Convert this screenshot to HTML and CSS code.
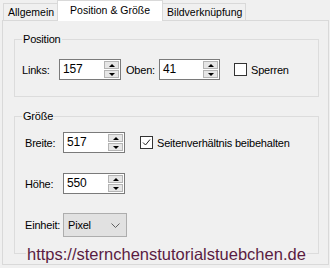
FILE: index.html
```html
<!DOCTYPE html>
<html lang="de">

<head>
    <meta charset="UTF-8">
    <title>Position &amp; Größe</title>
    <link rel="stylesheet" href="styles.css">
</head>

<body>
    <div class="dialog">
        <div class="tabs">
            <div class="tab">Allgemein</div>
            <div class="tab active">Position &amp; Größe</div>
            <div class="tab">Bildverknüpfung</div>
        </div>

        <div class="page">
            <!-- Position -->
            <fieldset class="group group-pos">
                <legend>Position</legend>
                <div class="row">
                    <span class="lbl lbl-links">Links:</span>
                    <div class="spin"><span class="val">157</span><span class="spin-btns"><span class="up"></span><span class="down"></span></span></div>
                    <span class="lbl lbl-oben">Oben:</span>
                    <div class="spin spin-narrow"><span class="val">41</span><span class="spin-btns"><span class="up"></span><span class="down"></span></span></div>
                    <span class="check check-lock"></span>
                    <span class="check-text">Sperren</span>
                </div>
            </fieldset>

            <!-- Größe -->
            <fieldset class="group group-size">
                <legend>Größe</legend>
                <div class="row">
                    <span class="lbl lbl-col">Breite:</span>
                    <div class="spin"><span class="val">517</span><span class="spin-btns"><span class="up"></span><span class="down"></span></span></div>
                    <span class="check check-ratio checked">
                        <svg width="11" height="11" viewBox="0 0 11 11"><polyline points="2,5.5 4.5,8 9,2.5" fill="none" stroke="#222" stroke-width="1"/></svg>
                    </span>
                    <span class="check-text">Seitenverhältnis beibehalten</span>
                </div>
                <div class="row">
                    <span class="lbl lbl-col">Höhe:</span>
                    <div class="spin"><span class="val">550</span><span class="spin-btns"><span class="up"></span><span class="down"></span></span></div>
                </div>
                <div class="row">
                    <span class="lbl lbl-col">Einheit:</span>
                    <div class="select">
                        <span class="val">Pixel</span>
                        <svg class="chev" width="9" height="5" viewBox="0 0 9 5"><polyline points="0.5,0.5 4.5,4.5 8.5,0.5" fill="none" stroke="#606060" stroke-width="1"/></svg>
                    </div>
                </div>
            </fieldset>
        </div>

        <div class="watermark">https://sternchenstutorialstuebchen.de</div>
    </div>
</body>

</html>
```

FILE: styles.css
```css
body {
    margin: 0;
    padding: 0;
    background: #f0f0f0;
    font-family: "Liberation Sans", Arial, sans-serif;
    font-size: 11px;
    letter-spacing: -0.2px;
    color: #000;
    overflow: hidden;
}

.dialog {
    position: relative;
    width: 330px;
    height: 268px;
}

/* Tabs */

.tabs {
    display: flex;
    align-items: flex-end;
    height: 20px;
    padding-left: 3px;
    font-size: 10.5px;
    letter-spacing: 0;
}

.tab {
    box-sizing: border-box;
    height: 17px;
    padding: 1px 3px 0 4px;
    border: 1px solid #d9d9d9;
    border-bottom: none;
    line-height: 14px;
    white-space: nowrap;
    background: #f0f0f0;
}

.tab.active {
    position: relative;
    z-index: 1;
    height: 21px;
    margin-bottom: -1px;
    margin-left: -1px;
    margin-right: -1px;
    padding: 2px 12px 0 12px;
    background: #fff;
}

/* Page */

.page {
    box-sizing: border-box;
    height: 245px;
    margin: 0 1px 0 2px;
    padding: 12px 9px 0 11px;
    border: 1px solid #d9d9d9;
}

.group {
    margin: 0;
    padding: 13px 8px 16px 7px;
    border: 1px solid #dcdcdc;
    min-width: 0;
}

.group legend {
    padding: 0 1px;
    line-height: 13px;
}

.group-size {
    margin-top: 13px;
    padding-top: 9px;
    padding-bottom: 16px;
}

.group-size .row {
    padding-left: 3px;
}

.group-size .row + .row {
    margin-top: 20px;
}

.group-size .row:last-child {
    margin-top: 19px;
}

.row {
    display: flex;
    align-items: center;
}

.lbl {
    white-space: nowrap;
}

.lbl-links {
    width: 37px;
}

.lbl-oben {
    width: 33px;
    margin-left: 5px;
}

.lbl-col {
    width: 38px;
}

/* Spin box */

.spin {
    box-sizing: border-box;
    display: flex;
    width: 62px;
    height: 21px;
    border: 1px solid #7a7a7a;
    background: #fff;
}

.spin-narrow {
    width: 61px;
}

.spin .val {
    flex: 1;
    padding-left: 3px;
    line-height: 19px;
    font-size: 12px;
}

.spin-btns {
    display: flex;
    flex-direction: column;
    width: 15px;
    margin: 1px 1px 1px 0;
    gap: 1px;
}

.spin-btns span {
    flex: 1;
    display: flex;
    justify-content: center;
    align-items: center;
    background: #e6e6e6;
    border: 1px solid #b4b4b4;
}

.spin-btns .up::after {
    content: "";
    border-left: 3px solid transparent;
    border-right: 3px solid transparent;
    border-bottom: 3px solid #000;
}

.spin-btns .down::after {
    content: "";
    border-left: 3px solid transparent;
    border-right: 3px solid transparent;
    border-top: 3px solid #000;
}

/* Checkbox */

.check {
    box-sizing: border-box;
    display: flex;
    justify-content: center;
    align-items: center;
    width: 13px;
    height: 13px;
    border: 1px solid #333;
    background: #fff;
}

.check-lock {
    margin-left: 14px;
}

.check-ratio {
    margin-left: 15px;
}

.check-text {
    margin-left: 4px;
    white-space: nowrap;
}

/* Select */

.select {
    box-sizing: border-box;
    display: flex;
    align-items: center;
    justify-content: space-between;
    width: 64px;
    height: 24px;
    padding: 0 6px 0 4px;
    border: 1px solid #adadad;
    background: #e1e1e1;
}

.select .val {
    font-size: 11px;
}

/* Watermark over the bottom of the page */

.watermark {
    position: absolute;
    left: 26px;
    top: 246px;
    padding: 0 1px;
    font-size: 16.5px;
    letter-spacing: 0;
    line-height: 17px;
    color: #5a1c42;
    background: #f0f0f0;
}
```
